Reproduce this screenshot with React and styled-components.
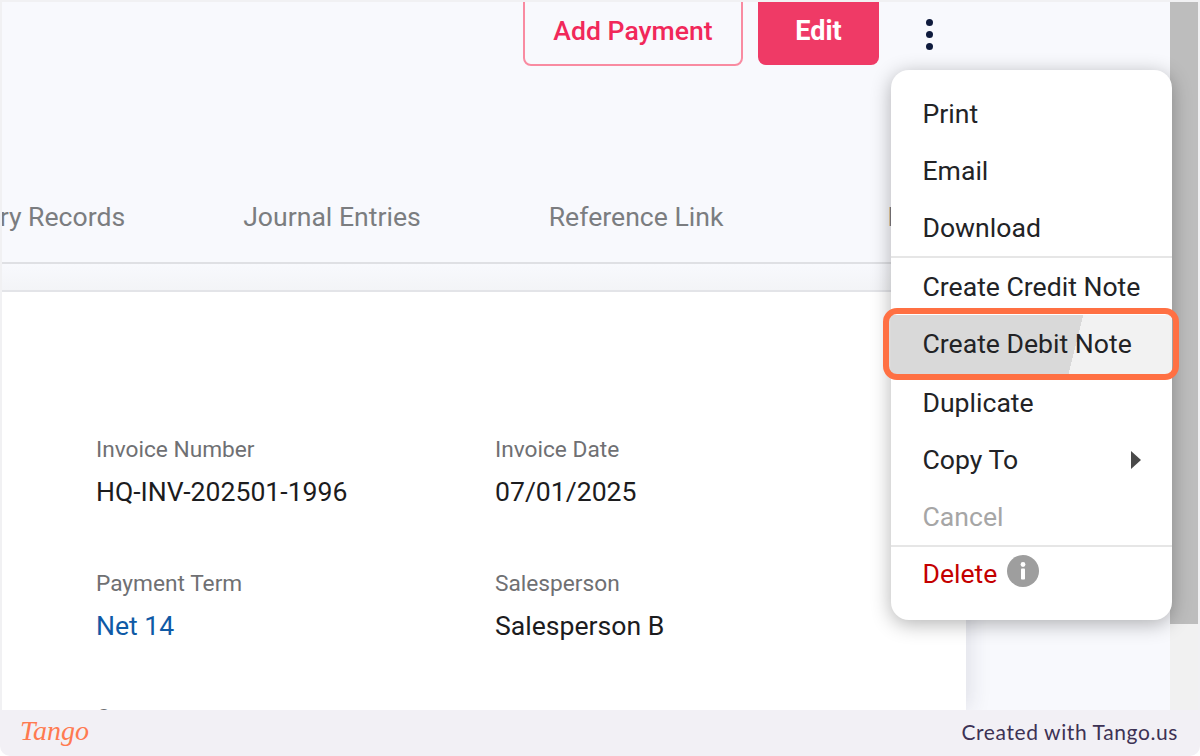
import React from 'react'
import styled, { createGlobalStyle } from 'styled-components'

const GlobalStyle = createGlobalStyle`
  html, body {
    margin: 0;
    padding: 0;
    background: #fff;
  }
  * {
    box-sizing: border-box;
  }
`

const tabs = [
  { label: 'Delivery Records', gap: 118 },
  { label: 'Journal Entries', gap: 128 },
  { label: 'Reference Link', gap: 164 },
  { label: 'History', gap: 198 },
]

const details = [
  { label: 'Invoice Number', value: 'HQ-INV-202501-1996' },
  { label: 'Invoice Date', value: '07/01/2025' },
  { label: 'Payment Term', value: 'Net 14', link: true },
  { label: 'Salesperson', value: 'Salesperson B' },
  { label: 'Currency', value: 'USD' },
]

export default function App() {
  return (
    <Screen>
      <GlobalStyle />
      <Viewport>
        <Main>
          <Header>
            <OutlineButton>Add Payment</OutlineButton>
            <FilledButton>Edit</FilledButton>
            <Kebab>
              <i />
              <i />
              <i />
            </Kebab>
          </Header>
          <TabBar>
            {tabs.map((tab) => (
              <Tab key={tab.label} $gap={tab.gap}>{tab.label}</Tab>
            ))}
          </TabBar>
          <Band />
          <CardRow>
            <Card>
              {details.map((item) => (
                <Field key={item.label}>
                  <FieldLabel>{item.label}</FieldLabel>
                  <FieldValue $link={item.link}>{item.value}</FieldValue>
                </Field>
              ))}
            </Card>
          </CardRow>
        </Main>
        <ScrollTrack>
          <ScrollThumb />
        </ScrollTrack>
        <Menu>
          <MenuItem>Print</MenuItem>
          <MenuItem>Email</MenuItem>
          <MenuItem>Download</MenuItem>
          <Divider />
          <MenuItem>Create Credit Note</MenuItem>
          <HighlightItem>Create Debit Note</HighlightItem>
          <MenuItem>Duplicate</MenuItem>
          <MenuItem>
            Copy To
            <Caret />
          </MenuItem>
          <MenuItem $muted>Cancel</MenuItem>
          <Divider />
          <DeleteItem $danger>
            Delete
            <InfoIcon viewBox="0 0 32 32">
              <circle cx="16" cy="16" r="16" fill="#9e9e9e" />
              <circle cx="16" cy="9.5" r="2.4" fill="#fff" />
              <rect x="14" y="13.5" width="4" height="11" rx="0.8" fill="#fff" />
            </InfoIcon>
          </DeleteItem>
        </Menu>
      </Viewport>
      <Footer>
        <Logo>Tango</Logo>
        <Credit>Created with Tango.us</Credit>
      </Footer>
    </Screen>
  )
}

const Screen = styled.div`
  display: flex;
  flex-direction: column;
  width: 1200px;
  height: 756px;
  overflow: hidden;
  font-family: Roboto, "Liberation Sans", sans-serif;
`

const Viewport = styled.div`
  position: relative;
  display: flex;
  height: 710px;
  padding: 2px 2px 0 2px;
  background: #f1f1f3;
  overflow: hidden;
`

const Main = styled.div`
  display: flex;
  flex-direction: column;
  width: 1168px;
  background: #f8f9fd;
`

const Header = styled.div`
  display: flex;
  justify-content: flex-end;
  align-items: flex-end;
  gap: 15px;
  height: 64px;
  flex-shrink: 0;
  padding-right: 291px;
  overflow: hidden;
`

const OutlineButton = styled.button`
  width: 220px;
  height: 72px;
  padding: 1px 0 0;
  background: transparent;
  border: 2px solid #f98ba1;
  border-radius: 8px;
  color: #f1285a;
  font: 500 26.6px Roboto, sans-serif;
`

const FilledButton = styled.button`
  width: 121px;
  height: 71px;
  padding: 2px 0 0;
  margin-bottom: 1px;
  background: #ef3a66;
  border: none;
  border-radius: 8px;
  color: #fff;
  font: 700 27px Roboto, sans-serif;
`

const Kebab = styled.div`
  position: absolute;
  top: 19px;
  left: 926px;
  display: flex;
  flex-direction: column;
  gap: 5px;
  i {
    display: block;
    width: 7px;
    height: 7px;
    border-radius: 50%;
    background: #0f1b3d;
  }
`

const TabBar = styled.div`
  display: flex;
  justify-content: flex-end;
  align-items: center;
  height: 198px;
  flex-shrink: 0;
  padding-top: 105px;
  border-bottom: 2px solid #dfe0e4;
  overflow: hidden;
`

const Tab = styled.div`
  flex-shrink: 0;
  margin-right: ${(p) => p.$gap}px;
  color: #7b7d80;
  font-size: 26.6px;
  line-height: 30px;
  white-space: nowrap;
`

const Band = styled.div`
  height: 28px;
  flex-shrink: 0;
  background: linear-gradient(#f8f9fd, #f3f4f7);
  border-bottom: 2px solid #e3e4e8;
`

const CardRow = styled.div`
  flex: 1;
  display: flex;
  overflow: hidden;
`

const Card = styled.div`
  width: 964px;
  display: grid;
  grid-template-columns: 399px 1fr;
  grid-auto-rows: 134px;
  padding: 144px 0 0 94px;
  background: #fff;
  box-shadow: 2px 0 22px rgba(40, 45, 70, 0.14);
`

const Field = styled.div`
  display: flex;
  flex-direction: column;
  gap: 13px;
`

const FieldLabel = styled.div`
  color: #6f7073;
  font-size: 22.7px;
  line-height: 28px;
`

const FieldValue = styled.div`
  color: ${(p) => (p.$link ? '#0f5aa6' : '#1c1c1e')};
  font-size: 26.6px;
  line-height: 30px;
`

const ScrollTrack = styled.div`
  flex: 1;
  background: #f1f1f1;
`

const ScrollThumb = styled.div`
  width: 100%;
  height: 622px;
  background: #bdbdbd;
`

const Menu = styled.div`
  position: absolute;
  top: 70px;
  left: 891px;
  width: 281px;
  height: 550px;
  padding-top: 15px;
  background: #fff;
  border-radius: 18px;
  box-shadow: 0 4px 20px rgba(0, 0, 0, 0.3);
`

const MenuItem = styled.div`
  position: relative;
  display: flex;
  align-items: center;
  height: 57px;
  padding-left: 31.5px;
  color: ${(p) => (p.$danger ? '#c40000' : p.$muted ? '#a6a6a6' : '#222326')};
  font-size: 26.6px;
  white-space: nowrap;
`

const HighlightItem = styled(MenuItem)`
  height: 59px;
  padding-bottom: 2px;
  background: linear-gradient(104deg, #d9d9d9 0 65%, #f2f2f2 65% 100%);
  &::after {
    content: '';
    position: absolute;
    top: -7px;
    left: -8px;
    right: -7px;
    bottom: -6px;
    border: 6px solid #ff7043;
    border-radius: 14px;
  }
`

const DeleteItem = styled(MenuItem)`
  height: 52px;
`

const Divider = styled.div`
  height: 2px;
  background: #e6e6e6;
`

const Caret = styled.span`
  position: absolute;
  right: 31px;
  top: 50%;
  margin-top: -9px;
  width: 0;
  height: 0;
  border-top: 9px solid transparent;
  border-bottom: 9px solid transparent;
  border-left: 10px solid #4a4a4a;
`

const InfoIcon = styled.svg`
  width: 32px;
  height: 32px;
  margin-left: 10px;
  margin-top: -4px;
`

const Footer = styled.div`
  display: flex;
  justify-content: space-between;
  align-items: center;
  height: 46px;
  padding: 0 22px 4px 20px;
  background: #f2f0f5;
  border-radius: 0 0 10px 10px;
`

const Logo = styled.div`
  color: #ff7a50;
  font-family: "Liberation Serif", serif;
  font-style: italic;
  font-size: 28px;
`

const Credit = styled.div`
  color: #3d3254;
  font-family: Lato, sans-serif;
  font-size: 21px;
  letter-spacing: 0.6px;
`
